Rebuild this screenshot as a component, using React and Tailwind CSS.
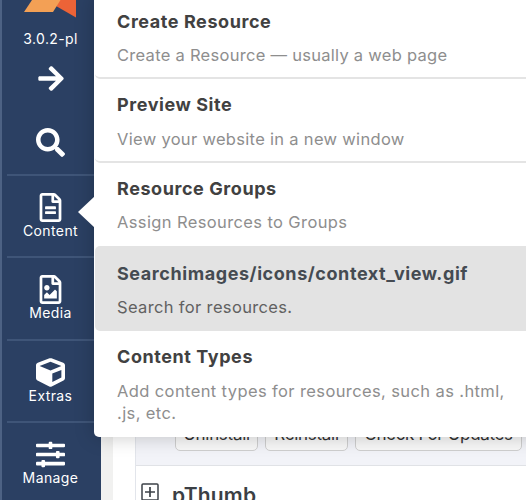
import { FaArrowRight, FaSearch, FaRegFileAlt, FaRegFileImage, FaCube, FaSlidersH } from 'react-icons/fa';

const nav = [
  { label: 'Content', Icon: FaRegFileAlt },
  { label: 'Media', Icon: FaRegFileImage },
  { label: 'Extras', Icon: FaCube },
  { label: 'Manage', Icon: FaSlidersH },
];

const items = [
  { title: 'Create Resource', text: 'Create a Resource — usually a web page', row: 'h-[84px] pt-[15px] gap-[10px] border-b-2 border-[#e4e4e4]', spacing: 'tracking-[0.28px]' },
  { title: 'Preview Site', text: 'View your website in a new window', row: 'h-[84px] pt-[14px] gap-[11px] border-b-2 border-[#e4e4e4]', spacing: 'tracking-[0.31px]' },
  { title: 'Resource Groups', text: 'Assign Resources to Groups', row: 'h-[84px] pt-[14px] gap-[10px]', spacing: 'tracking-[0.38px]' },
  { title: 'Searchimages/icons/context_view.gif', text: 'Search for resources.', row: '-mt-px h-[85px] pt-[16px] gap-[10px]', spacing: 'tracking-[0.35px]', active: true },
  { title: 'Content Types', text: 'Add content types for resources, such as .html, .js, etc.', row: 'h-[106px] pt-[14px] gap-[11px]', spacing: 'tracking-[0.39px]' },
];

function Sidebar() {
  return (
    <nav className="flex h-[500px] w-[101px] shrink-0 flex-col border-l-2 border-[#4d6284] bg-[#2b4063] text-white">
      <div className="flex h-[174px] w-[97px] shrink-0 flex-col items-center">
        <svg className="-mt-[22px] ml-[-2px] h-10 w-[54px]" viewBox="0 0 54 40">
          <path d="M36 10 L53 10 L53 39.5 L33 28 Z" fill="#ec6337" />
          <path d="M17 10 L45 10 L30 34 L1 34 Z" fill="#f3a055" />
        </svg>
        <div className="mt-[11px] h-5 text-[14px] leading-5 tracking-[0.35px]">3.0.2-pl</div>
        <FaArrowRight className="mt-[15px] h-[29px] w-[26px]" />
        <FaSearch className="mt-[35px] h-[29px] w-[29px]" />
      </div>
      {nav.map(({ label, Icon }) => (
        <div key={label} className="ml-[5px] flex h-[82.3px] w-[94px] shrink-0 flex-col items-center border-t-2 border-[#3f5578] pt-[17px] pr-[7px]">
          <Icon className="h-[29px] w-[29px] shrink-0" />
          <div className="text-[14px] leading-[18px] tracking-[0.4px]">{label}</div>
        </div>
      ))}
    </nav>
  );
}

function Menu() {
  return (
    <div className="absolute -top-[5px] left-[94px] w-[450px] rounded-[5px] bg-white shadow-[0_0_20px_rgba(0,0,0,0.22)]">
      <svg className="absolute top-[201px] -left-[16px] h-8 w-[17px]" viewBox="0 0 17 32">
        <path d="M17 0 V32 L0 16 Z" fill="white" />
      </svg>
      {items.map(({ title, text, row, spacing, active }) => (
        <div key={title} className={`ml-px flex flex-col rounded-[5px] pl-[22px] ${row} ${active ? 'bg-[#e3e3e3]' : ''}`}>
          <div className={`text-[18px] leading-6 font-bold tracking-[0.57px] ${active ? 'text-[#454b52]' : 'text-[#414141]'}`}>{title}</div>
          <div className={`w-[400px] text-[16.5px] leading-[22px] ${spacing} ${active ? 'text-[#616161]' : 'text-[#8e8e8e]'}`}>{text}</div>
        </div>
      ))}
    </div>
  );
}

function Packages() {
  return (
    <main className="flex h-[500px] grow bg-[#f1f1f0] pl-3">
      <div className="flex grow bg-white pl-[22px]">
        <section className="grow border-l border-[#e2e5eb]">
          <div className="flex h-[466px] items-end gap-[7px] border-b border-[#e0e2e6] bg-[#f2f3f8] pb-[14px] pl-[39px] text-[17px] text-[#333]">
            <button className="h-[35px] w-[83px] shrink-0 rounded-[5px] border border-[#cfcfcf] bg-[#f8f8f8] leading-[34px] tracking-[-0.3px]">Uninstall</button>
            <button className="h-[35px] w-[83px] shrink-0 rounded-[5px] border border-[#cfcfcf] bg-[#f8f8f8] leading-[34px] tracking-[-0.3px]">Reinstall</button>
            <button className="h-[35px] w-[167px] shrink-0 rounded-[5px] border border-[#cfcfcf] bg-[#f8f8f8] leading-[34px] tracking-[-0.35px]">Check For Updates</button>
          </div>
          <div className="flex pt-[17px] pl-[5px]">
            <svg className="h-[18px] w-[18px]" viewBox="0 0 18 18" fill="none" stroke="#3d4248">
              <rect x="1" y="1" width="16" height="16" rx="1" strokeWidth="1.5" />
              <path d="M9 4 V14 M4 9 H14" strokeWidth="1.7" />
            </svg>
            <div className="mt-px ml-[13px] text-[21px] leading-6 font-semibold tracking-[0.2px] text-[#3b3f45]">pThumb</div>
          </div>
        </section>
      </div>
    </main>
  );
}

export default function App() {
  return (
    <div className="relative flex h-[500px] w-[526px] overflow-hidden bg-white font-['Inter','Liberation_Sans',sans-serif]">
      <Sidebar />
      <Packages />
      <Menu />
    </div>
  );
}
